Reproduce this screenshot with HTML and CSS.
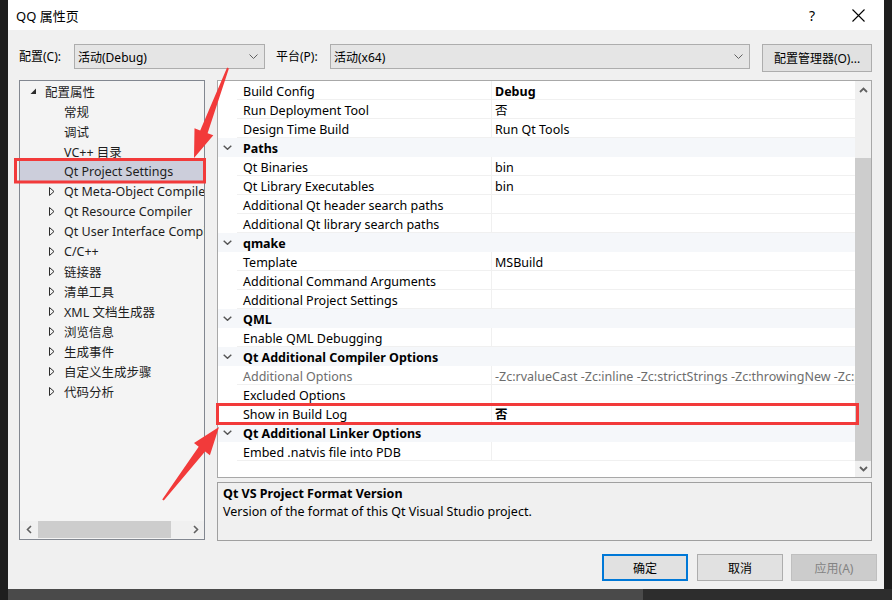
FILE: index.html
```html
<!DOCTYPE html>
<html>
<head>
<meta charset="utf-8">
<link rel="stylesheet" href="styles.css">
</head>
<body>
<div class="dialog">
  <div class="titlebar">
    <span class="title">QQ 属性页</span>
    <span class="help">?</span>
    <span class="close"><svg width="13" height="13" viewBox="0 0 13 13"><path d="M0.5 0.5L12.5 12.5M12.5 0.5L0.5 12.5" stroke="#000" stroke-width="1.1" fill="none"/></svg></span>
  </div>
  <div class="config-row">
    <span class="lbl lbl-cfg">配置(C):</span>
    <div class="combo combo-cfg"><span>活动(Debug)</span><svg class="drop" width="9" height="5" viewBox="0 0 9 5"><path d="M0.5 0.5L4.5 4.5L8.5 0.5" stroke="#606060" fill="none"/></svg></div>
    <span class="lbl lbl-plat">平台(P):</span>
    <div class="combo combo-plat"><span>活动(x64)</span><svg class="drop" width="9" height="5" viewBox="0 0 9 5"><path d="M0.5 0.5L4.5 4.5L8.5 0.5" stroke="#606060" fill="none"/></svg></div>
    <div class="btn btn-mgr">配置管理器(O)...</div>
  </div>
  <div class="main">
    <div class="tree">
      <div class="tree-list">
        <div class="node root"><span class="tw"><svg width="7" height="7" viewBox="0 0 7 7"><path d="M6 0.5L6 6L0.5 6Z" fill="#2b2b2b"/></svg></span>配置属性</div>
        <div class="node child"><span class="tw"></span>常规</div>
        <div class="node child"><span class="tw"></span>调试</div>
        <div class="node child"><span class="tw"></span>VC++ 目录</div>
        <div class="node child sel"><span class="tw"></span>Qt Project Settings</div>
        <div class="node child"><span class="tw"><svg width="6" height="9" viewBox="0 0 6 9"><path d="M0.5 0.5L5 4.5L0.5 8.5Z" stroke="#2b2b2b" fill="none"/></svg></span>Qt Meta-Object Compiler</div>
        <div class="node child"><span class="tw"><svg width="6" height="9" viewBox="0 0 6 9"><path d="M0.5 0.5L5 4.5L0.5 8.5Z" stroke="#2b2b2b" fill="none"/></svg></span>Qt Resource Compiler</div>
        <div class="node child"><span class="tw"><svg width="6" height="9" viewBox="0 0 6 9"><path d="M0.5 0.5L5 4.5L0.5 8.5Z" stroke="#2b2b2b" fill="none"/></svg></span>Qt User Interface Compiler</div>
        <div class="node child"><span class="tw"><svg width="6" height="9" viewBox="0 0 6 9"><path d="M0.5 0.5L5 4.5L0.5 8.5Z" stroke="#2b2b2b" fill="none"/></svg></span>C/C++</div>
        <div class="node child"><span class="tw"><svg width="6" height="9" viewBox="0 0 6 9"><path d="M0.5 0.5L5 4.5L0.5 8.5Z" stroke="#2b2b2b" fill="none"/></svg></span>链接器</div>
        <div class="node child"><span class="tw"><svg width="6" height="9" viewBox="0 0 6 9"><path d="M0.5 0.5L5 4.5L0.5 8.5Z" stroke="#2b2b2b" fill="none"/></svg></span>清单工具</div>
        <div class="node child"><span class="tw"><svg width="6" height="9" viewBox="0 0 6 9"><path d="M0.5 0.5L5 4.5L0.5 8.5Z" stroke="#2b2b2b" fill="none"/></svg></span>XML 文档生成器</div>
        <div class="node child"><span class="tw"><svg width="6" height="9" viewBox="0 0 6 9"><path d="M0.5 0.5L5 4.5L0.5 8.5Z" stroke="#2b2b2b" fill="none"/></svg></span>浏览信息</div>
        <div class="node child"><span class="tw"><svg width="6" height="9" viewBox="0 0 6 9"><path d="M0.5 0.5L5 4.5L0.5 8.5Z" stroke="#2b2b2b" fill="none"/></svg></span>生成事件</div>
        <div class="node child"><span class="tw"><svg width="6" height="9" viewBox="0 0 6 9"><path d="M0.5 0.5L5 4.5L0.5 8.5Z" stroke="#2b2b2b" fill="none"/></svg></span>自定义生成步骤</div>
        <div class="node child"><span class="tw"><svg width="6" height="9" viewBox="0 0 6 9"><path d="M0.5 0.5L5 4.5L0.5 8.5Z" stroke="#2b2b2b" fill="none"/></svg></span>代码分析</div>
      </div>
      <div class="hscroll">
        <span class="sarr"><svg width="6" height="9" viewBox="0 0 6 9"><path d="M5 1L1.5 4.5L5 8" stroke="#606060" stroke-width="1.6" fill="none"/></svg></span>
        <span class="hthumb"></span>
        <span class="hspace"></span>
        <span class="sarr"><svg width="6" height="9" viewBox="0 0 6 9"><path d="M1 1L4.5 4.5L1 8" stroke="#606060" stroke-width="1.6" fill="none"/></svg></span>
      </div>
    </div>
    <div class="grid-col">
      <div class="grid">
        <div class="rows">
          <div class="row"><span class="gut"></span><span class="name">Build Config</span><span class="val bold">Debug</span></div>
          <div class="row"><span class="gut"></span><span class="name">Run Deployment Tool</span><span class="val">否</span></div>
          <div class="row"><span class="gut"></span><span class="name">Design Time Build</span><span class="val">Run Qt Tools</span></div>
          <div class="row cat"><span class="gut"><svg width="9" height="5" viewBox="0 0 9 5"><path d="M0.7 0.7L4.5 4.3L8.3 0.7" stroke="#555" stroke-width="1.4" fill="none"/></svg></span><span class="name">Paths</span></div>
          <div class="row"><span class="gut"></span><span class="name">Qt Binaries</span><span class="val">bin</span></div>
          <div class="row"><span class="gut"></span><span class="name">Qt Library Executables</span><span class="val">bin</span></div>
          <div class="row"><span class="gut"></span><span class="name">Additional Qt header search paths</span><span class="val"></span></div>
          <div class="row"><span class="gut"></span><span class="name">Additional Qt library search paths</span><span class="val"></span></div>
          <div class="row cat"><span class="gut"><svg width="9" height="5" viewBox="0 0 9 5"><path d="M0.7 0.7L4.5 4.3L8.3 0.7" stroke="#555" stroke-width="1.4" fill="none"/></svg></span><span class="name">qmake</span></div>
          <div class="row"><span class="gut"></span><span class="name">Template</span><span class="val">MSBuild</span></div>
          <div class="row"><span class="gut"></span><span class="name">Additional Command Arguments</span><span class="val"></span></div>
          <div class="row"><span class="gut"></span><span class="name">Additional Project Settings</span><span class="val"></span></div>
          <div class="row cat"><span class="gut"><svg width="9" height="5" viewBox="0 0 9 5"><path d="M0.7 0.7L4.5 4.3L8.3 0.7" stroke="#555" stroke-width="1.4" fill="none"/></svg></span><span class="name">QML</span></div>
          <div class="row"><span class="gut"></span><span class="name">Enable QML Debugging</span><span class="val"></span></div>
          <div class="row cat"><span class="gut"><svg width="9" height="5" viewBox="0 0 9 5"><path d="M0.7 0.7L4.5 4.3L8.3 0.7" stroke="#555" stroke-width="1.4" fill="none"/></svg></span><span class="name">Qt Additional Compiler Options</span></div>
          <div class="row"><span class="gut"></span><span class="name dim">Additional Options</span><span class="val dim">-Zc:rvalueCast -Zc:inline -Zc:strictStrings -Zc:throwingNew -Zc:referenceBinding</span></div>
          <div class="row"><span class="gut"></span><span class="name">Excluded Options</span><span class="val"></span></div>
          <div class="row"><span class="gut"></span><span class="name">Show in Build Log</span><span class="val bold">否</span></div>
          <div class="row cat"><span class="gut"><svg width="9" height="5" viewBox="0 0 9 5"><path d="M0.7 0.7L4.5 4.3L8.3 0.7" stroke="#555" stroke-width="1.4" fill="none"/></svg></span><span class="name">Qt Additional Linker Options</span></div>
          <div class="row"><span class="gut"></span><span class="name">Embed .natvis file into PDB</span><span class="val"></span></div>
        </div>
        <div class="vscroll">
          <span class="varr"><svg width="9" height="6" viewBox="0 0 9 6"><path d="M1 5L4.5 1.5L8 5" stroke="#606060" stroke-width="1.8" fill="none"/></svg></span>
          <span class="vthumb"></span>
          <span class="varr varr-down"><svg width="9" height="6" viewBox="0 0 9 6"><path d="M1 1L4.5 4.5L8 1" stroke="#606060" stroke-width="1.8" fill="none"/></svg></span>
        </div>
      </div>
      <div class="desc">
        <div class="desc-title">Qt VS Project Format Version</div>
        <div class="desc-text">Version of the format of this Qt Visual Studio project.</div>
      </div>
    </div>
  </div>
  <div class="buttons">
    <div class="btn btn-act default">确定</div>
    <div class="btn btn-act">取消</div>
    <div class="btn btn-act disabled">应用(A)</div>
  </div>
</div>
<div class="strip"><span class="seg-a"></span><span class="seg-b"></span></div>
<svg class="annot" width="892" height="600" viewBox="0 0 892 600">
  <rect x="15.5" y="159.5" width="189" height="22.5" fill="none" stroke="#f23a3a" stroke-width="3"/>
  <rect x="217.5" y="404.5" width="640" height="19" fill="none" stroke="#f23a3a" stroke-width="3"/>
  <polygon points="228.9,68.4 207.6,133.2 213.3,135.3 194,158 194.5,128.3 200.2,130.4 227.1,67.6" fill="#f23a3a"/>
  <polygon points="163.8,500.6 205.1,451.6 209.9,455.3 219,427 194,443.1 198.7,446.8 162.2,499.4" fill="#f23a3a"/>
</svg>
</body>
</html>
```
FILE: styles.css
```css
html, body {
  margin: 0;
  padding: 0;
}
body {
  background: #1e1e1e;
  font-family: "Noto Sans", "Noto Sans CJK SC", sans-serif;
  font-size: 12px;
  color: #000;
  width: 892px;
  height: 600px;
  overflow: hidden;
  position: relative;
}
.dialog {
  margin-left: 8px;
  width: 876px;
  height: 589px;
  background: #f0f0f0;
  display: flex;
  flex-direction: column;
}
.titlebar {
  height: 30px;
  background: #fff;
  display: flex;
  align-items: center;
  padding-left: 8px;
  flex: none;
}
.title {
  font-size: 13px;
}
.help {
  margin-left: auto;
  font-size: 14px;
  width: 12px;
}
.close {
  margin-left: 31px;
  margin-right: 19px;
  display: flex;
}
.config-row {
  height: 50px;
  display: flex;
  align-items: flex-start;
  padding-top: 14px;
  padding-left: 11px;
  box-sizing: border-box;
  flex: none;
}
.lbl {
  height: 25px;
  line-height: 25px;
}
.lbl-cfg { width: 55px; }
.lbl-plat { width: 54px; margin-left: 11px; }
.combo {
  height: 25px;
  box-sizing: border-box;
  border: 1px solid #adadad;
  background: #e5e5e5;
  display: flex;
  align-items: center;
  padding-left: 3px;
  padding-right: 6px;
}
.combo span { flex: 1; }
.combo-cfg { width: 191px; }
.combo-plat { width: 420px; }
.btn {
  box-sizing: border-box;
  border: 1px solid #adadad;
  background: #e1e1e1;
  display: flex;
  align-items: center;
  justify-content: center;
}
.btn-mgr {
  margin-left: 12px;
  width: 110px;
  height: 28px;
}
.main {
  display: flex;
  padding-left: 11px;
  gap: 12px;
  height: 461px;
  flex: none;
  font-size: 12.5px;
}
.tree {
  width: 186px;
  height: 460px;
  box-sizing: border-box;
  border: 1px solid #828790;
  background: #f4f4f4;
  display: flex;
  flex-direction: column;
}
.tree-list {
  flex: 1;
  overflow: hidden;
}
.node {
  height: 20px;
  display: flex;
  align-items: center;
  white-space: nowrap;
  color: #1e1e1e;
  padding-top: 1px;
  box-sizing: border-box;
}
.node.root { padding-left: 10px; }
.node.child { padding-left: 29px; }
.tw {
  width: 15px;
  flex: none;
  display: flex;
  align-items: center;
}
.node.sel { background: #cccedb; }
.hscroll {
  height: 17px;
  flex: none;
  display: flex;
  background: #f0f0f0;
  margin-bottom: 1px;
}
.sarr {
  width: 17px;
  display: flex;
  align-items: center;
  justify-content: center;
}
.hthumb {
  width: 133px;
  margin-left: 1px;
  background: #cdcdcd;
}
.hspace { flex: 1; }
.grid-col {
  width: 655px;
  display: flex;
  flex-direction: column;
  gap: 4px;
}
.grid {
  height: 398px;
  box-sizing: border-box;
  border: 1px solid #a8a8a8;
  background: #fff;
  display: flex;
}
.rows {
  flex: 1;
  overflow: hidden;
}
.row {
  height: 19px;
  display: flex;
  box-sizing: border-box;
  white-space: nowrap;
}
.gut {
  width: 19px;
  flex: none;
  display: flex;
  align-items: center;
  justify-content: center;
}
.name {
  width: 254px;
  flex: none;
  padding-left: 6px;
  padding-top: 3px;
  box-sizing: border-box;
  line-height: 15px;
  border-bottom: 1px solid #f0f0f0;
}
.val {
  flex: 1;
  padding-left: 3px;
  padding-top: 3px;
  line-height: 15px;
  border-left: 1px solid #f0f0f0;
  border-bottom: 1px solid #f0f0f0;
  overflow: hidden;
}
.bold { font-weight: bold; }
.dim { color: #6d6d6d; }
.row.cat { background: #f5f7fa; }
.row.cat .name {
  font-weight: bold;
  width: auto;
  flex: 1;
  border-bottom: none;
}
.vscroll {
  width: 16px;
  flex: none;
  background: #f0f0f0;
  display: flex;
  flex-direction: column;
}
.varr {
  height: 17px;
  display: flex;
  align-items: center;
  justify-content: center;
}
.varr-down { height: 16px; }
.vthumb {
  margin-top: 60px;
  height: 303px;
  background: #cdcdcd;
}
.desc {
  height: 59px;
  box-sizing: border-box;
  border: 1px solid #a0a0a0;
  padding: 2px 5px 0 5px;
  line-height: 18px;
}
.desc-title { font-weight: bold; }
.buttons {
  display: flex;
  justify-content: flex-end;
  gap: 9px;
  padding-right: 7px;
  margin-top: 13px;
}
.btn-act {
  width: 86px;
  height: 27px;
}
.btn-act.default {
  border: 2px solid #0078d7;
}
.btn-act.disabled {
  background: #cccccc;
  border-color: #bfbfbf;
  color: #838383;
  margin-left: -1px;
}
.strip {
  margin-left: 8px;
  height: 11px;
  display: flex;
}
.seg-a {
  width: 635px;
  background: #4a4a4a;
}
.seg-b {
  flex: 1;
  background: #2d2d2d;
}
.annot {
  position: absolute;
  left: 0;
  top: 0;
  pointer-events: none;
}
```
